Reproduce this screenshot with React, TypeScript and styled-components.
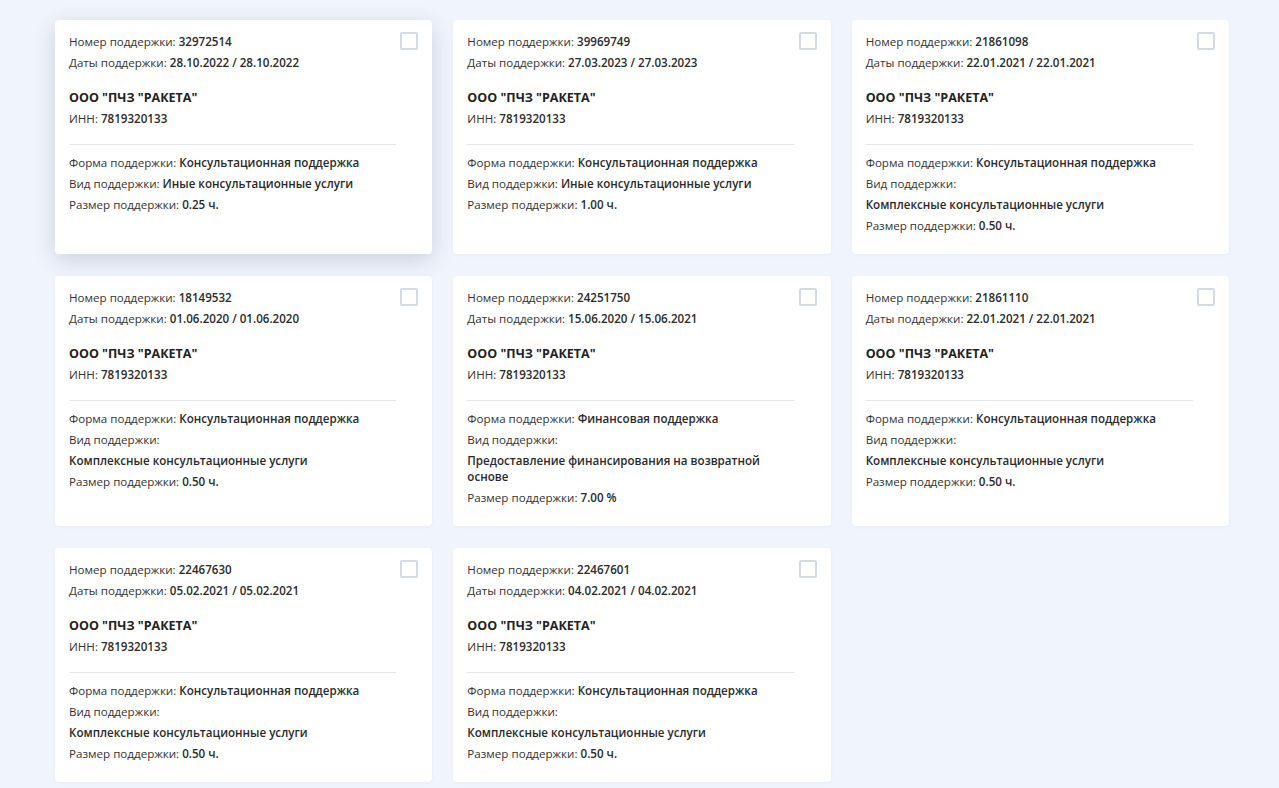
import React from "react";
import styled, { createGlobalStyle } from "styled-components";

const GlobalStyle = createGlobalStyle`
  html, body { margin: 0; padding: 0; background: #f0f4fd; }
  body { font-family: "Open Sans", "Noto Sans", Arial, sans-serif; color: #333; }
`;

const Page = styled.div`
  padding: 20px 50px 40px 55px;
  min-height: 100vh;
  box-sizing: border-box;
`;

const Grid = styled.div`
  display: grid;
  grid-template-columns: repeat(3, 1fr);
  column-gap: 21px;
  row-gap: 22px;
  width: 1174px;
`;

const Card = styled.div<{ $active?: boolean }>`
  position: relative;
  background: #fff;
  border-radius: 4px;
  padding: 14px 36px 20px 14px;
  box-shadow: ${(p) =>
    p.$active
      ? "0 6px 22px rgba(40, 50, 80, 0.18)"
      : "0 1px 3px rgba(40, 60, 110, 0.06)"};
`;

const Check = styled.span`
  position: absolute;
  top: 12px;
  right: 14px;
  width: 14px;
  height: 14px;
  border: 2px solid #d3dae5;
  border-radius: 2px;
  background: #fff;
`;

const Section = styled.div<{ $mt?: number }>`
  display: flex;
  flex-direction: column;
  gap: 5px;
  margin-top: ${(p) => p.$mt ?? 0}px;
`;

const Row = styled.div`
  font-size: 11.6px;
  line-height: 16px;
  color: #333;
`;

const Value = styled.span<{ $block?: boolean }>`
  font-weight: 600;
  color: #2a2a2a;
  display: ${(p) => (p.$block ? "block" : "inline")};
  margin-top: ${(p) => (p.$block ? "5px" : "0")};
`;

const Company = styled.div`
  font-size: 12.5px;
  line-height: 16px;
  font-weight: 700;
  color: #222;
`;

const Divider = styled.hr`
  border: none;
  border-top: 1px solid #e4e6ea;
  margin: 17px 0 10px;
`;

type Item = {
  num: string;
  dates: string;
  form: string;
  kind: string;
  kindBlock?: boolean;
  size: string;
  active?: boolean;
};

const items: Item[] = [
  { num: "32972514", dates: "28.10.2022 / 28.10.2022", form: "Консультационная поддержка", kind: "Иные консультационные услуги", size: "0.25 ч.", active: true },
  { num: "39969749", dates: "27.03.2023 / 27.03.2023", form: "Консультационная поддержка", kind: "Иные консультационные услуги", size: "1.00 ч." },
  { num: "21861098", dates: "22.01.2021 / 22.01.2021", form: "Консультационная поддержка", kind: "Комплексные консультационные услуги", kindBlock: true, size: "0.50 ч." },
  { num: "18149532", dates: "01.06.2020 / 01.06.2020", form: "Консультационная поддержка", kind: "Комплексные консультационные услуги", kindBlock: true, size: "0.50 ч." },
  { num: "24251750", dates: "15.06.2020 / 15.06.2021", form: "Финансовая поддержка", kind: "Предоставление финансирования на возвратной основе", kindBlock: true, size: "7.00 %" },
  { num: "21861110", dates: "22.01.2021 / 22.01.2021", form: "Консультационная поддержка", kind: "Комплексные консультационные услуги", kindBlock: true, size: "0.50 ч." },
  { num: "22467630", dates: "05.02.2021 / 05.02.2021", form: "Консультационная поддержка", kind: "Комплексные консультационные услуги", kindBlock: true, size: "0.50 ч." },
  { num: "22467601", dates: "04.02.2021 / 04.02.2021", form: "Консультационная поддержка", kind: "Комплексные консультационные услуги", kindBlock: true, size: "0.50 ч." },
];

export default function App() {
  return (
    <>
      <GlobalStyle />
      <Page>
        <Grid>
          {items.map((it) => (
            <Card key={it.num} $active={it.active}>
              <Check />
              <Section>
                <Row>
                  Номер поддержки: <Value>{it.num}</Value>
                </Row>
                <Row>
                  Даты поддержки: <Value>{it.dates}</Value>
                </Row>
              </Section>
              <Section $mt={19}>
                <Company>ООО "ПЧЗ "РАКЕТА"</Company>
                <Row>
                  ИНН: <Value>7819320133</Value>
                </Row>
              </Section>
              <Divider />
              <Section>
                <Row>
                  Форма поддержки: <Value>{it.form}</Value>
                </Row>
                <Row>
                  Вид поддержки: <Value $block={it.kindBlock}>{it.kind}</Value>
                </Row>
                <Row>
                  Размер поддержки: <Value>{it.size}</Value>
                </Row>
              </Section>
            </Card>
          ))}
        </Grid>
      </Page>
    </>
  );
}
